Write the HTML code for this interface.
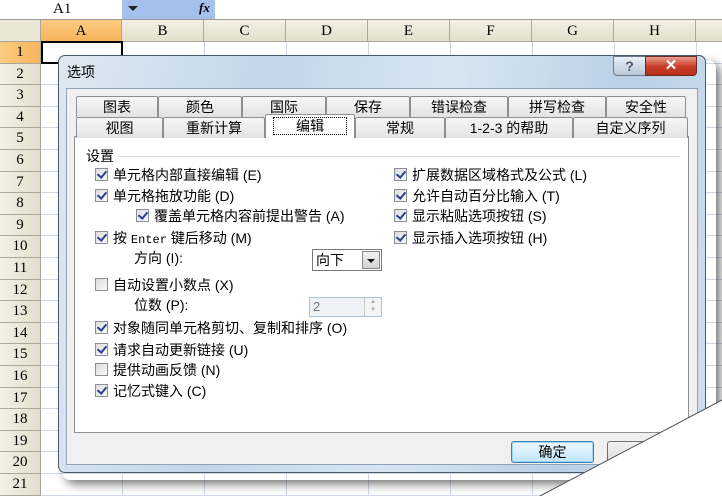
<!DOCTYPE html>
<html><head><meta charset="utf-8"><style>
*{margin:0;padding:0;box-sizing:border-box}
body{width:722px;height:496px;overflow:hidden;background:#fff;position:relative;font-family:"Liberation Sans","Noto Sans CJK SC",sans-serif;font-size:13px;color:#000}
.a{position:absolute}
.colh{position:absolute;top:20px;height:22px;background:linear-gradient(#f3f1e6,#e2dfcc);border-right:1px solid #a9a89a;border-bottom:1px solid #a9a89a;text-align:center;font-family:"Liberation Serif",serif;font-size:15px;line-height:22px}
.rowh{position:absolute;left:0;width:41px;background:linear-gradient(90deg,#f3f1e6,#e2dfcc);border-bottom:1px solid #a9a89a;border-right:1px solid #a9a89a;text-align:center;font-family:"Liberation Serif",serif;font-size:15px}
.vl{position:absolute;top:42px;bottom:0;width:1px;background:#d0d7e5}
.hl{position:absolute;left:41px;right:0;height:1px;background:#d0d7e5}
.tab{position:absolute;height:21px;border:1px solid #8e8f8f;border-bottom:none;background:linear-gradient(#f6f6f6,#e3e3e3);text-align:center;font-size:14px;line-height:20px;border-radius:2px 2px 0 0}
.cb{position:absolute;width:13px;height:13px;border:1px solid #8a8f99;background:linear-gradient(135deg,#dcdcdc,#fafafa)}
.cb.k::after{content:"";position:absolute;left:3px;top:0px;width:4px;height:7px;border:solid #2a3f92;border-width:0 2px 2px 0;transform:rotate(40deg)}
.lb{position:absolute;font-size:14px;line-height:16px;white-space:nowrap}
</style></head><body>
<!-- formula bar -->
<div class="a" style="left:0;top:0;width:122px;height:19px;background:#fff;font-family:'Liberation Serif',serif;font-size:15px;line-height:19px;padding-left:53px">A1</div>
<div class="a" style="left:122px;top:0;width:93px;height:19px;background:#a5c0ea"></div>
<div class="a" style="left:128px;top:6px;border:5px solid transparent;border-top:5px solid #222;border-bottom:none"></div>
<div class="a" style="left:199px;top:0;font-family:'Liberation Serif',serif;font-style:italic;font-weight:bold;font-size:13px">fx</div>
<div class="a" style="left:0;top:19px;width:722px;height:1px;background:#9a9a9a"></div>
<!-- headers -->
<div class="colh" style="left:0;width:41px;background:#e9e6d6"></div>
<div class="colh" style="left:41px;width:81px;background:linear-gradient(#fbcb82,#f6b55a)">A</div>
<div class="colh" style="left:122px;width:82px">B</div>
<div class="colh" style="left:204px;width:82px">C</div>
<div class="colh" style="left:286px;width:82px">D</div>
<div class="colh" style="left:368px;width:82px">E</div>
<div class="colh" style="left:450px;width:82px">F</div>
<div class="colh" style="left:532px;width:82px">G</div>
<div class="colh" style="left:614px;width:82px">H</div>
<div class="colh" style="left:696px;width:30px"></div>
<div class="vl" style="left:122px"></div><div class="vl" style="left:204px"></div><div class="vl" style="left:286px"></div><div class="vl" style="left:368px"></div><div class="vl" style="left:450px"></div><div class="vl" style="left:532px"></div><div class="vl" style="left:614px"></div><div class="vl" style="left:696px"></div>
<div id="rows"></div>
<script>
var r='';for(var i=1;i<=21;i++){var t=42+(i-1)*21.6;r+='<div class="rowh" style="top:'+t+'px;height:21.6px;line-height:21px'+(i==1?';background:linear-gradient(90deg,#fbcb82,#f6b55a)':'')+'">'+i+'</div><div class="hl" style="top:'+(t+20.6)+'px"></div>';}
document.getElementById('rows').innerHTML=r;
</script>
<div class="a" style="left:41px;top:41px;width:82px;height:23px;border:2px solid #000"></div>
<!-- dialog shadow -->
<div class="a" style="left:62px;top:60px;width:654px;height:420px;border-radius:8px;box-shadow:4px 4px 10px rgba(0,0,0,.55)"></div>
<!-- dialog frame -->
<div class="a" style="left:58px;top:55px;width:648px;height:418px;border:1px solid #4a5a6a;border-radius:7px;background:linear-gradient(100deg,#dfe8f1 0%,#c2d6ea 30%,#d8e5f1 55%,#b9d0e6 80%,#cfdfee 100%)"></div>
<div class="lb" style="left:67px;top:64px;font-size:14px">选项</div>
<!-- help/close -->
<div class="a" style="left:613px;top:56px;width:33px;height:20px;border:1px solid #6a7a8a;border-radius:0 0 0 4px;background:linear-gradient(#e8eef4,#b9c8d8);text-align:center;color:#556;font-weight:bold;font-size:14px;line-height:18px">?</div>
<div class="a" style="left:645px;top:56px;width:52px;height:20px;border:1px solid #6a2a20;border-radius:0 0 4px 0;background:linear-gradient(#e8a090,#c8402c 50%,#b8301c);text-align:center;color:#fff;font-weight:bold;font-size:15px;line-height:18px">✕</div>
<!-- inner panel -->
<div class="a" style="left:66px;top:88px;width:632px;height:377px;background:#f0f0f0;border:1px solid #8fa3b8"></div>
<!-- content -->
<div class="a" style="left:74px;top:136px;width:615px;height:297px;background:#fff;border:1px solid #8e8f8f"></div>
<!-- tabs row1 -->
<div class="tab" style="left:76px;top:96px;width:82px">图表</div>
<div class="tab" style="left:158px;top:96px;width:84px">颜色</div>
<div class="tab" style="left:242px;top:96px;width:84px">国际</div>
<div class="tab" style="left:326px;top:96px;width:84px">保存</div>
<div class="tab" style="left:410px;top:96px;width:98px">错误检查</div>
<div class="tab" style="left:508px;top:96px;width:98px">拼写检查</div>
<div class="tab" style="left:606px;top:96px;width:80px">安全性</div>
<!-- tabs row2 -->
<div class="tab" style="left:76px;top:117px;width:87px">视图</div>
<div class="tab" style="left:163px;top:117px;width:102px">重新计算</div>
<div class="tab" style="left:355px;top:117px;width:90px">常规</div>
<div class="tab" style="left:445px;top:117px;width:128px">1-2-3 的帮助</div>
<div class="tab" style="left:573px;top:117px;width:115px">自定义序列</div>
<div class="tab" style="left:265px;top:114px;width:90px;height:24px;background:#fff;z-index:2"><span style="display:inline-block;margin-top:2px;border:1px dotted #000;padding:0 22px;line-height:16px">编辑</span></div>
<!-- settings -->
<div class="lb" style="left:86px;top:148px">设置</div>
<div class="a" style="left:118px;top:156px;width:562px;height:1px;background:#d5dfe5"></div>
<div class="cb k" style="left:95px;top:168px"></div><div class="lb" style="left:113px;top:167px">单元格内部直接编辑 (E)</div>
<div class="cb k" style="left:95px;top:189px"></div><div class="lb" style="left:113px;top:188px">单元格拖放功能 (D)</div>
<div class="cb k" style="left:136px;top:209px"></div><div class="lb" style="left:154px;top:208px">覆盖单元格内容前提出警告 (A)</div>
<div class="cb k" style="left:95px;top:231px"></div><div class="lb" style="left:113px;top:230px">按 <span style="font-family:'Liberation Mono',monospace;font-size:12px">Enter</span> 键后移动 (M)</div>
<div class="lb" style="left:134px;top:250px">方向 (I):</div>
<div class="a" style="left:312px;top:249px;width:70px;height:22px;border:1px solid #7a7a7a;background:#fff;font-size:14px;line-height:20px;padding-left:3px">向下</div>
<div class="a" style="left:362px;top:251px;width:18px;height:18px;border:1px solid #888;background:linear-gradient(#f2f2f2,#d4d4d4)"></div>
<div class="a" style="left:367px;top:259px;border:4px solid transparent;border-top:4px solid #111;border-bottom:none"></div>
<div class="cb" style="left:95px;top:278px"></div><div class="lb" style="left:113px;top:277px">自动设置小数点 (X)</div>
<div class="lb" style="left:134px;top:297px">位数 (P):</div>
<div class="a" style="left:309px;top:297px;width:73px;height:20px;border:1px solid #a8c4dc;background:#eef2f6;color:#777;font-size:13px;line-height:18px;padding-left:3px">2</div>
<div class="a" style="left:364px;top:298px;width:17px;height:18px;border-left:1px solid #ccc;background:#f4f4f4;color:#aaa;font-size:6px;line-height:8px;text-align:center">▲<br>▼</div>
<div class="cb k" style="left:95px;top:321px"></div><div class="lb" style="left:113px;top:320px">对象随同单元格剪切、复制和排序 (O)</div>
<div class="cb k" style="left:95px;top:343px"></div><div class="lb" style="left:113px;top:342px">请求自动更新链接 (U)</div>
<div class="cb" style="left:95px;top:363px"></div><div class="lb" style="left:113px;top:362px">提供动画反馈 (N)</div>
<div class="cb k" style="left:95px;top:384px"></div><div class="lb" style="left:113px;top:383px">记忆式键入 (C)</div>
<div class="cb k" style="left:394px;top:168px"></div><div class="lb" style="left:412px;top:167px">扩展数据区域格式及公式 (L)</div>
<div class="cb k" style="left:394px;top:189px"></div><div class="lb" style="left:412px;top:188px">允许自动百分比输入 (T)</div>
<div class="cb k" style="left:394px;top:209px"></div><div class="lb" style="left:412px;top:208px">显示粘贴选项按钮 (S)</div>
<div class="cb k" style="left:394px;top:231px"></div><div class="lb" style="left:412px;top:230px">显示插入选项按钮 (H)</div>
<!-- buttons -->
<div class="a" style="left:511px;top:441px;width:83px;height:22px;border:1px solid #3c7fb1;border-radius:3px;background:linear-gradient(#eaf6fd,#d9f0fc 50%,#bee6fd);box-shadow:inset 0 0 0 1px #9fd4f5;text-align:center;font-size:14px;line-height:20px">确定</div>
<div class="a" style="left:607px;top:441px;width:83px;height:22px;border:1px solid #707070;border-radius:3px;background:linear-gradient(#f2f2f2,#dcdcdc)"></div>
<!-- page curl -->
<svg class="a" style="left:0;top:0" width="722" height="496">
<defs><linearGradient id="g" x1="0" y1="1" x2="1" y2="0"><stop offset="0" stop-color="#fff"/><stop offset="1" stop-color="#fff"/></linearGradient></defs>
<polygon points="540,496 722,400 722,496" fill="#fff"/>
<line x1="540" y1="496" x2="722" y2="400" stroke="#555" stroke-width="1"/>
</svg>
</body></html>
